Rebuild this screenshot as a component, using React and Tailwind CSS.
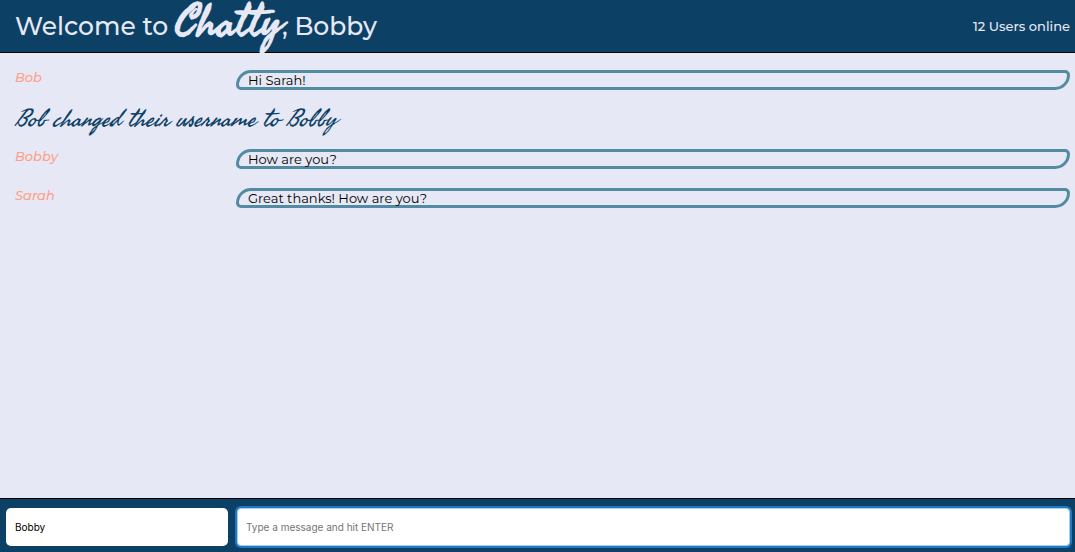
import { useState } from "react";

const messages = [
  { id: 1, type: "message", username: "Bob", content: "Hi Sarah!" },
  { id: 2, type: "notice", content: "Bob changed their username to Bobby" },
  { id: 3, type: "message", username: "Bobby", content: "How are you?" },
  { id: 4, type: "message", username: "Sarah", content: "Great thanks! How are you?" },
];

function NavBar({ username, online }) {
  return (
    <header className="flex h-[53px] shrink-0 items-center justify-between border-b border-black bg-[#0d4065] pr-[5px] pl-[15px] text-[#e6e9f5]">
      <h1 className="flex items-baseline text-[25px] leading-[50px] font-medium whitespace-pre">
        <span>Welcome to </span>
        <span className="font-[Satisfy,'Seaweed_Script','Liberation_Serif',cursive] text-[44px] leading-[40px] font-bold">Chatty</span>
        <span>, {username}</span>
      </h1>
      <p className="text-[13px] leading-4 font-medium">{online} Users online</p>
    </header>
  );
}

function Message({ username, content }) {
  return (
    <div className="flex items-start pl-[15px]">
      <span className="w-[221px] shrink-0 text-[13px] leading-[15px] font-medium text-[#ffa086] italic">{username}</span>
      <p className="flex-1 rounded-[5px] rounded-tl-[15px] rounded-br-[15px] border-3 border-[#538ba2] px-[9px] text-[13px] leading-[14px] text-black">
        {content}
      </p>
    </div>
  );
}

function Notice({ content }) {
  return (
    <p className="-my-1 pl-[15px] font-[Satisfy,'Seaweed_Script','Liberation_Serif',cursive] text-[24px] leading-[29px] text-[#0d4065] italic">
      {content}
    </p>
  );
}

function ChatBar({ username, onRename }) {
  const [draft, setDraft] = useState("");
  return (
    <footer className="flex h-[54px] shrink-0 items-center gap-[9px] border-t border-black bg-[#0d4065] pt-[2px] pr-[5px] pl-[6px] font-[Inter,sans-serif] text-[10px]">
      <input
        aria-label="Your name"
        className="h-[38px] w-[222px] shrink-0 rounded-[5px] bg-white px-[9px] text-black"
        value={username}
        onChange={(e) => onRename(e.target.value)}
      />
      <input
        aria-label="Message"
        className="h-[38px] min-w-0 flex-1 rounded-[4px] border border-[#a9cdf0] bg-white px-2 text-black ring-2 ring-[#1f78c4] outline-none placeholder:text-[#757575]"
        placeholder="Type a message and hit ENTER"
        value={draft}
        onChange={(e) => setDraft(e.target.value)}
      />
    </footer>
  );
}

export default function App() {
  const [username, setUsername] = useState("Bobby");
  return (
    <div className="flex h-screen flex-col bg-[#e6e9f5] font-[Montserrat,Inter,sans-serif]">
      <NavBar username={username} online={12} />
      <main className="flex flex-1 flex-col gap-[19px] overflow-y-auto pt-[17px] pr-[5px]">
        {messages.map((m) =>
          m.type === "notice" ? (
            <Notice key={m.id} content={m.content} />
          ) : (
            <Message key={m.id} username={m.username} content={m.content} />
          )
        )}
      </main>
      <ChatBar username={username} onRename={setUsername} />
    </div>
  );
}
